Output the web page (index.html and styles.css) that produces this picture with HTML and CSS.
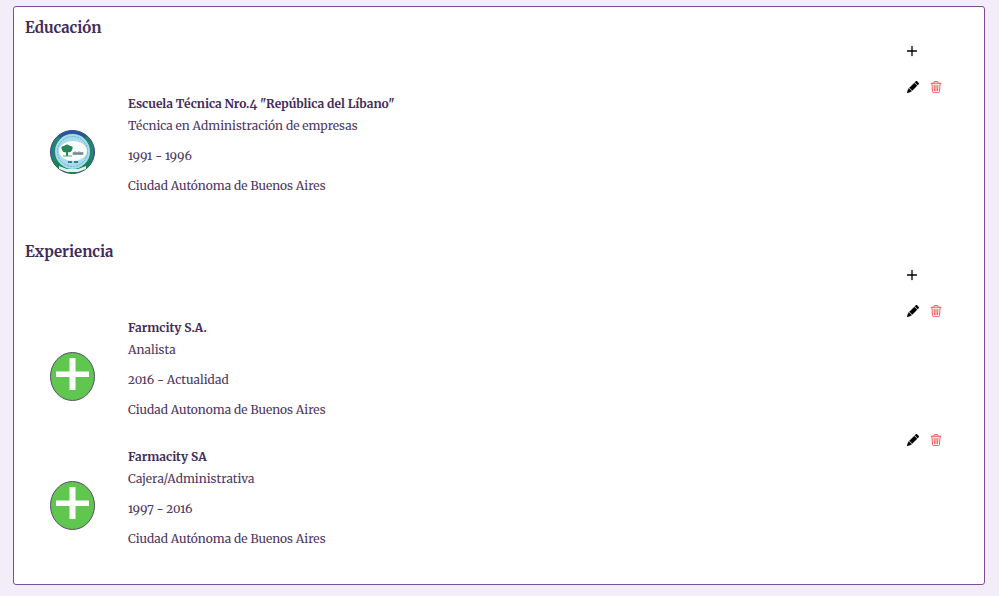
FILE: index.html
```html
<!DOCTYPE html>
<html lang="es">
<head>
<meta charset="utf-8">
<meta name="viewport" content="width=device-width, initial-scale=1">
<title>Educación y experiencia</title>
<link rel="stylesheet" href="styles.css">
</head>
<body>
<svg class="sprite" aria-hidden="true">
  <symbol id="plus" viewBox="0 0 16 16"><path d="M8 3.500v9M3.500 8h9" fill="none" stroke="currentColor" stroke-width="1.3" stroke-linecap="round"/></symbol>
  <symbol id="pencil" viewBox="0 0 16 16"><path d="M12.9.1a.5.5 0 0 0-.7 0l-1.700 1.700 3.700 3.700 1.700-1.700a.5.5 0 0 0 0-.7zM13.500 6.200 9.800 2.500 3.300 9h.2a.5.5 0 0 1 .5.5v.5h.5a.5.5 0 0 1 .5.5v.5h.5a.5.5 0 0 1 .5.5v.5h.5a.5.5 0 0 1 .5.5v.2zM6 13.700V13h-.5a.5.5 0 0 1-.5-.5V12h-.5a.5.5 0 0 1-.5-.5V11h-.5a.5.5 0 0 1-.5-.5V10h-.7l-.3.300-2 5a.5.5 0 0 0 .7.700l5-2z" fill="currentColor" stroke="currentColor" stroke-width=".4"/></symbol>
  <symbol id="trash" viewBox="0 0 16 16"><g fill="none" stroke="currentColor" stroke-linecap="round" stroke-linejoin="round"><path d="M1.500 3h13M5.500 3V1.500a1 1 0 0 1 1-1h3a1 1 0 0 1 1 1V3M2.500 3l.9 11.100a1.500 1.500 0 0 0 1.500 1.400h6.200a1.500 1.500 0 0 0 1.500-1.400L13.500 3M5.500 5.500l.4 7.500M8 5.500V13M10.500 5.500 10.100 13" stroke-width="1.300"/></g></symbol>
  <symbol id="cross" viewBox="0 0 45 49" preserveAspectRatio="none"><ellipse cx="22.500" cy="24.500" rx="22" ry="24" fill="#5fc64e" stroke="#5b4a72"/><path d="M19.500 6h6v13.500H39v5.500H25.500V38h-6V25H6v-5.500h13.500z" fill="#fff"/></symbol>
</svg>
<main class="panel">
  <section class="section">
    <h2 class="heading">Educación</h2>
    <div class="add"><button class="icon-button" aria-label="Agregar educación"><svg><use href="#plus"/></svg></button></div>
    <article class="entry">
      <div class="logo">
        <svg class="seal" viewBox="0 0 45 44" aria-hidden="true">
          <ellipse cx="22.500" cy="22" rx="22" ry="21.500" fill="#238473" stroke="#46418c"/>
          <path d="M9 7Q22-3 36 7" fill="none" stroke="#2854a0" stroke-width="3"/>
          <path d="M5 31Q10 41 22.500 41T40 31" fill="none" stroke="#168553" stroke-width="4"/>
          <circle cx="22.500" cy="21.500" r="17.500" fill="#a8dcec"/>
          <circle cx="22.500" cy="21.500" r="15" fill="none" stroke="#6fb3cd" stroke-dasharray="2 1"/>
          <ellipse cx="23" cy="21" rx="14" ry="10" fill="#f8fcfa"/>
          <path d="M12 20q-2-4 2-4 3-3 6 0 4 0 2 4-1 3-4 2v4h-2v-4q-3 1-4-2" fill="#258758"/>
          <path d="M13 26h9" stroke="#62a377" stroke-width="1"/>
          <path d="M23 22.500h10v2H23zM25 21v1M29 21v1" fill="#71878c" stroke="#8fa1a5" stroke-width="1"/>
          <path d="M18 32h4M24 32h4" stroke="#397c91" stroke-width="2"/>
          <path d="M9 36l8 3h11l8-3v3l-8 3H17l-8-3z" fill="#e3f1e9"/>
        </svg>
      </div>
      <div class="details">
        <h3>Escuela Técnica Nro.4 "República del Líbano"</h3>
        <p>Técnica en Administración de empresas</p>
        <p>1991 - 1996</p>
        <p>Ciudad Autónoma de Buenos Aires</p>
      </div>
      <div class="actions">
        <button class="icon-button" aria-label="Editar"><svg><use href="#pencil"/></svg></button>
        <button class="icon-button danger" aria-label="Eliminar"><svg><use href="#trash"/></svg></button>
      </div>
    </article>
  </section>
  <section class="section">
    <h2 class="heading">Experiencia</h2>
    <div class="add"><button class="icon-button" aria-label="Agregar experiencia"><svg><use href="#plus"/></svg></button></div>
    <article class="entry">
      <div class="logo"><svg class="company" aria-hidden="true"><use href="#cross"/></svg></div>
      <div class="details">
        <h3>Farmcity S.A.</h3>
        <p>Analista</p>
        <p>2016 - Actualidad</p>
        <p>Ciudad Autonoma de Buenos Aires</p>
      </div>
      <div class="actions">
        <button class="icon-button" aria-label="Editar"><svg><use href="#pencil"/></svg></button>
        <button class="icon-button danger" aria-label="Eliminar"><svg><use href="#trash"/></svg></button>
      </div>
    </article>
    <article class="entry">
      <div class="logo"><svg class="company" aria-hidden="true"><use href="#cross"/></svg></div>
      <div class="details">
        <h3>Farmacity SA</h3>
        <p>Cajera/Administrativa</p>
        <p>1997 - 2016</p>
        <p>Ciudad Autónoma de Buenos Aires</p>
      </div>
      <div class="actions">
        <button class="icon-button" aria-label="Editar"><svg><use href="#pencil"/></svg></button>
        <button class="icon-button danger" aria-label="Eliminar"><svg><use href="#trash"/></svg></button>
      </div>
    </article>
  </section>
</main>
</body>
</html>
```

FILE: styles.css
```css
* { box-sizing: border-box; }
body {
  margin: 0;
  padding: 6px 14px 11px 13px;
  background: #f3ecf9;
  color: #432c5b;
  font: 12px/22px "Merriweather", "Liberation Serif", serif;
  font-variant-numeric: oldstyle-nums;
}
h2, h3, p { margin: 0; }
.sprite { position: absolute; width: 0; height: 0; }
.panel {
  display: flex;
  flex-direction: column;
  gap: 35px;
  padding: 9px 41px 26px 11px;
  background: #fff;
  border: 1px solid #7d4c98;
  border-radius: 3px;
}
.heading { font-size: 15px; line-height: 24px; font-weight: 700; }
.add {
  display: flex;
  justify-content: flex-end;
  padding-right: 24px;
  margin-bottom: 14px;
}
.entry {
  display: grid;
  grid-template-columns: 70px 1fr auto;
  column-gap: 33px;
}
.logo {
  display: flex;
  align-items: center;
  justify-content: flex-end;
  padding-top: 23px;
}
.seal { width: 45px; height: 44px; }
.company { width: 45px; height: 49px; }
.details { padding: 17px 0 8px; }
.details h3 { font-size: 12px; line-height: 22px; font-weight: 700; }
.details p { color: #4d3863; }
.details p + p { margin-top: 8px; }
.actions { display: flex; align-items: flex-start; gap: 9px; }
.icon-button {
  display: flex;
  width: 14px;
  height: 22px;
  padding: 0;
  align-items: center;
  justify-content: center;
  border: 0;
  background: none;
  color: #000;
  cursor: pointer;
}
.icon-button svg { width: 12px; height: 12px; }
.add .icon-button svg { width: 16px; height: 16px; flex: none; }
.danger { color: #ef5555; }
```
